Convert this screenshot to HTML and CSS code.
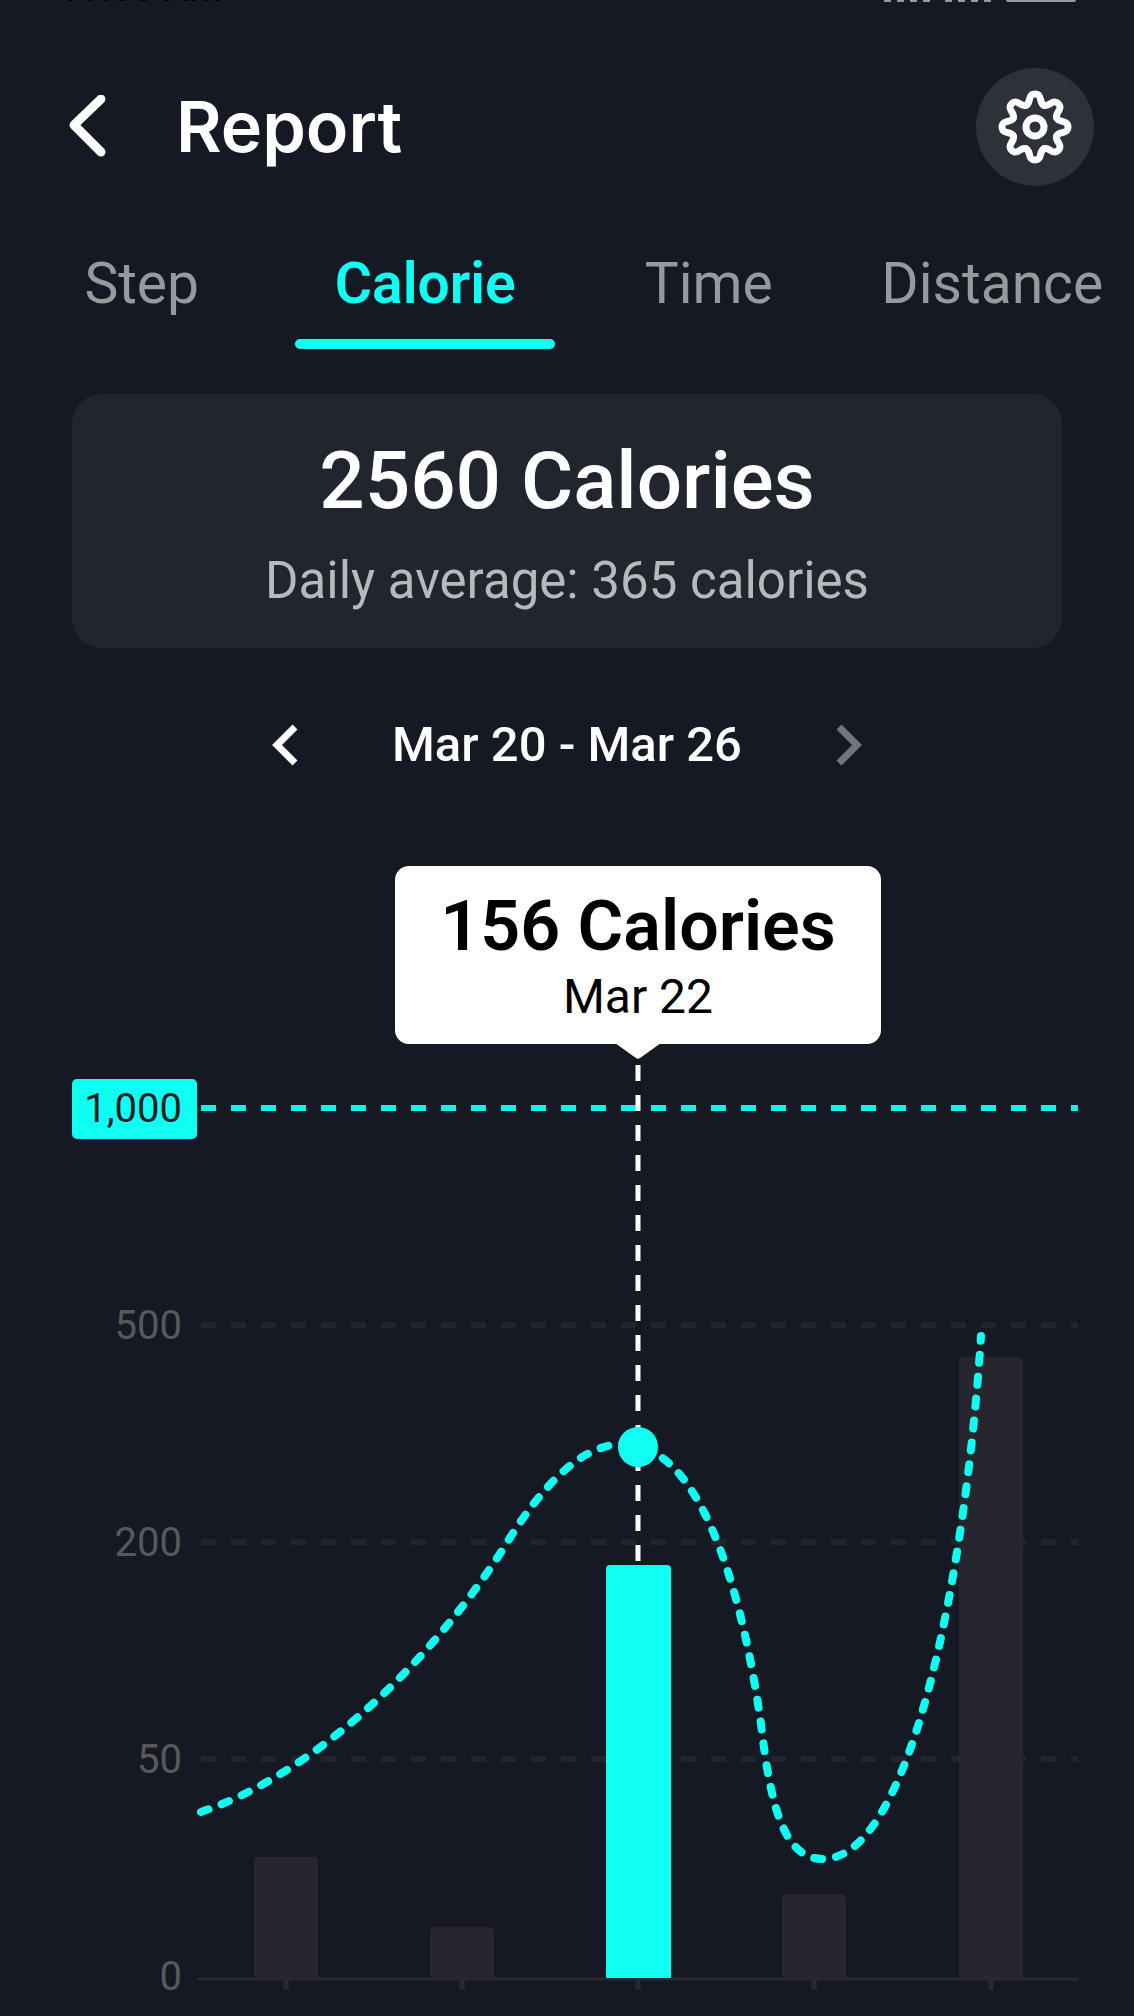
FILE: index.html
```html
<!DOCTYPE html>
<html lang="en">

<head>
    <meta charset="UTF-8">
    <meta name="viewport" content="width=device-width, initial-scale=1.0">
    <title>Report</title>
    <link rel="stylesheet" href="styles.css">
</head>

<body>
    <div class="status">
        <span class="status_time">10:30 AM</span>
        <span class="signal"></span>
        <span class="signal"></span>
        <span class="battery"></span>
    </div>

    <header class="header">
        <button class="back" type="button" aria-label="Back">
            <svg width="38" height="64" viewBox="0 0 38 64"><path d="M33 4L6 30L33 57"/></svg>
        </button>
        <h1>Report</h1>
        <button class="settings" type="button" aria-label="Settings">
            <svg width="74" height="74" viewBox="-37 -37 74 74">
                <defs>
                    <path id="tooth" d="M-9 -21.7C-3.5 -24 -8 -33 0 -33C8 -33 3.5 -24 9 -21.7"/>
                </defs>
                <use href="#tooth"/>
                <use href="#tooth" transform="rotate(45)"/>
                <use href="#tooth" transform="rotate(90)"/>
                <use href="#tooth" transform="rotate(135)"/>
                <use href="#tooth" transform="rotate(180)"/>
                <use href="#tooth" transform="rotate(225)"/>
                <use href="#tooth" transform="rotate(270)"/>
                <use href="#tooth" transform="rotate(315)"/>
                <circle r="9"/>
            </svg>
        </button>
    </header>

    <nav class="tabs">
        <a href="#">Step</a>
        <a href="#" class="current">Calorie</a>
        <a href="#">Time</a>
        <a href="#">Distance</a>
    </nav>

    <section class="total">
        <h2>2560 Calories</h2>
        <p>Daily average: 365 calories</p>
    </section>

    <div class="range">
        <button type="button" aria-label="Previous week">
            <svg width="26" height="42" viewBox="0 0 26 42"><path d="M23 3L5 21L23 39"/></svg>
        </button>
        <span>Mar 20 - Mar 26</span>
        <button class="next" type="button" aria-label="Next week">
            <svg width="26" height="42" viewBox="0 0 26 42"><path d="M3 3L21 21L3 39"/></svg>
        </button>
    </div>

    <section class="chart">
        <div class="scale">
            <span class="goal">1,000</span>
            <span>500</span>
            <span>200</span>
            <span>50</span>
            <span>0</span>
        </div>
        <div class="plot">
            <svg viewBox="0 0 882 924">
                <!-- grid -->
                <path class="grid" d="M4 246H881M4 463H881M4 680H881"/>
                <path class="grid grid_goal" d="M4 29H881"/>
                <!-- axis -->
                <path class="axis" d="M0 900H881"/>
                <path class="tick" d="M89 901V911M265 901V911M441 901V911M617 901V911M794 901V911"/>
                <!-- bars -->
                <path class="bar" d="M57 900V782q0 -4 4 -4h56q4 0 4 4V900z"/>
                <path class="bar" d="M233 900V852q0 -4 4 -4h56q4 0 4 4V900z"/>
                <path class="bar" d="M585 900V819q0 -4 4 -4h56q4 0 4 4V900z"/>
                <path class="bar" d="M762 900V282q0 -4 4 -4h56q4 0 4 4V900z"/>
                <path class="marker" d="M441 -14V486"/>
                <path class="bar active" d="M409 899V490q0 -4 4 -4h57q4 0 4 4V899z"/>
                <!-- trend -->
                <path class="trend" d="M4 733C113 696 228 591 306 470C343 409 381 368 423 365C503 361 545 511 564 645C573 721 585 780 626 780C713 780 768 501 784 257"/>
                <circle class="dot" cx="441" cy="368" r="20"/>
            </svg>
            <div class="tip">
                <strong>156 Calories</strong>
                <span>Mar 22</span>
            </div>
        </div>
    </section>
</body>

</html>
```
FILE: styles.css
```css
* {
    margin: 0;
    padding: 0;
    box-sizing: border-box;
}

body {
    background-color: #151923;
    color: #fff;
    font-family: Roboto, "Liberation Sans", sans-serif;
}

button {
    border: 0;
    background: none;
    color: inherit;
    cursor: pointer;
}

a {
    text-decoration: none;
}

svg {
    display: block;
    fill: none;
    stroke: currentColor;
}

/* status bar, scrolled almost out of view */
.status {
    display: flex;
    align-items: flex-end;
    gap: 15px;
    height: 2px;
    padding: 0 58px;
    overflow: hidden;
}

.status_time {
    margin-right: auto;
    color: #000;
    font-size: 38px;
    font-weight: 500;
    line-height: 28px;
}

.signal {
    width: 46px;
    height: 2px;
    background: repeating-linear-gradient(90deg, #97999d 0 7px, transparent 7px 13px);
}

.battery {
    width: 70px;
    height: 2px;
    border-radius: 0 0 2px 2px;
    background-color: #97999d;
}

.header {
    display: flex;
    align-items: center;
    padding: 66px 40px 0 68px;
}

.back path {
    stroke-width: 9;
    stroke-linecap: round;
    stroke-linejoin: round;
}

.header h1 {
    margin: 0 auto 0 70px;
    font-family: Inter, Roboto, sans-serif;
    font-size: 70px;
    font-weight: 600;
    line-height: 80px;
}

.settings {
    display: flex;
    align-items: center;
    justify-content: center;
    width: 118px;
    height: 118px;
    border-radius: 50%;
    background-color: #2d3139;
}

.settings svg {
    stroke-width: 7;
    stroke-linecap: round;
}

.tabs {
    display: grid;
    grid-template-columns: repeat(4, 1fr);
    margin-top: 63px;
}

.tabs a {
    color: #98999d;
    font-size: 57px;
    line-height: 70px;
    text-align: center;
}

.tabs .current {
    color: #0ffff2;
    font-weight: 600;
}

.tabs .current::after {
    content: "";
    display: block;
    width: 260px;
    height: 10px;
    margin: 20px auto 0;
    border-radius: 5px;
    background-color: #0ffff2;
}

.total {
    margin: 45px 72px 0;
    padding: 40px 0 32px;
    border-radius: 30px;
    background-color: #20252e;
    text-align: center;
}

.total h2 {
    font-size: 80px;
    font-weight: 500;
    line-height: 94px;
}

.total p {
    margin-top: 18px;
    color: #b8b9bc;
    font-size: 51px;
    line-height: 70px;
}

.range {
    display: flex;
    align-items: center;
    justify-content: center;
    gap: 94px;
    margin-top: 62px;
    font-size: 49px;
    font-weight: 500;
    line-height: 70px;
}

.range svg {
    stroke-width: 7;
}

.range .next {
    color: #73757b;
}

.chart {
    display: grid;
    grid-template-columns: 125px 1fr;
    align-items: start;
    margin: 299px 55px 0 72px;
}

.scale {
    display: grid;
    gap: 157px;
    color: #58595d;
    font-size: 40px;
    line-height: 60px;
    text-align: right;
}

.scale span {
    padding-right: 15px;
}

.scale .goal {
    border-radius: 5px;
    background-color: #0ffff2;
    color: #151923;
}

.plot {
    position: relative;
}

.plot svg {
    width: 100%;
    overflow: visible;
}

.grid {
    stroke: #22252c;
    stroke-width: 6;
    stroke-dasharray: 15 15;
}

.grid_goal {
    stroke: #0ff3e8;
}

.axis {
    stroke: #282a31;
    stroke-width: 3;
}

.tick {
    stroke: #282a31;
    stroke-width: 5;
}

.bar {
    fill: #27262e;
    stroke: none;
}

.active,
.dot {
    fill: #0ffff2;
    stroke: none;
}

.marker {
    stroke: #fff;
    stroke-width: 5;
    stroke-dasharray: 16 14;
}

.trend {
    stroke: #0ffff2;
    stroke-width: 8;
    stroke-linecap: round;
    stroke-dasharray: 8 14;
}

.tip {
    position: absolute;
    left: 50%;
    bottom: calc(100% + 35px);
    width: 486px;
    padding: 20px 0 16px;
    border-radius: 14px;
    background-color: #fff;
    color: #000;
    text-align: center;
    transform: translateX(-50%);
}

.tip::after {
    content: "";
    position: absolute;
    left: 50%;
    top: 100%;
    width: 46px;
    height: 16px;
    margin: -1px 0 0 -23px;
    background-color: #fff;
    clip-path: polygon(0 0, 100% 0, 56% 90%, 50% 100%, 44% 90%);
}

.tip strong {
    display: block;
    font-size: 70px;
    font-weight: 600;
    line-height: 80px;
}

.tip span {
    display: block;
    font-size: 48px;
    line-height: 62px;
}
```
